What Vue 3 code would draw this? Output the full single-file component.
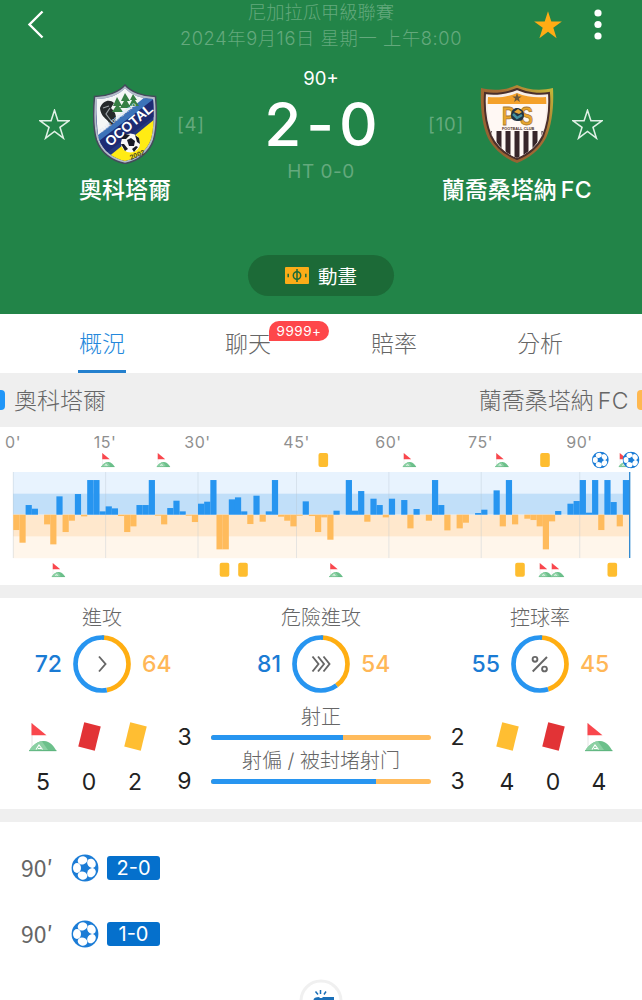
<template>
  <div class="page">
    <svg class="sprite" width="0" height="0">
      <symbol id="ball" viewBox="0 0 28 28">
        <circle cx="14" cy="14" r="13.4" fill="#1b7cd6" />
        <g fill="#fff">
          <ellipse
            v-for="a in [180, 108, 36, -36, -108]"
            :key="a"
            cx="22"
            cy="14"
            rx="4"
            ry="4.9"
            :transform="`rotate(${a} 14 14)`"
          />
        </g>
      </symbol>
      <symbol id="corner" viewBox="0 0 28 30">
        <path d="M3 1v25" stroke="#ddd" stroke-width="0.8" />
        <path d="M2.5 1L17.5 13.3h-15z" fill="#f9474d" />
        <path d="M0 29C5 21 11 18.500 15 19c6 .5 10 5 12.500 10z" fill="#6cc08b" />
        <path d="M0 29C4 22 9 19.500 13 19.500L19 28z" fill="#8bd0a3" />
        <path d="M7 27.500l3-4.500 3.500 4.500M9 26.500h3" fill="none" stroke="#fff" stroke-width="1.1" />
        <path d="M0 28.700h27.500" stroke="#58b078" stroke-width="0.8" />
      </symbol>
      <symbol id="star" viewBox="0 0 30 30">
        <path d="M15 1.200l3.300 10.200h10.600l-8.600 6.300 3.300 10.500-8.600-6.500-8.600 6.500 3.300-10.500L1.100 11.400h10.600z" />
      </symbol>
    </svg>

    <header class="head">
      <div class="topbar">
        <svg class="back" width="20" height="30" viewBox="0 0 20 30">
          <path d="M16.500 2.500L3.500 15.500l13 13" fill="none" stroke="#fff" stroke-width="2.400" />
        </svg>
        <div class="titles">
          <div class="league">尼加拉瓜甲級聯賽</div>
          <div class="date">2024年9月16日 星期一 上午8:00</div>
        </div>
        <svg class="fav" width="30" height="30"><use href="#star" /></svg>
        <svg class="more" width="8" height="32" viewBox="0 0 8 32">
          <circle v-for="y in [4, 15.5, 27]" :key="y" cx="4" :cy="y" r="3.600" fill="#fff" />
        </svg>
      </div>

      <div class="match">
        <div class="team">
          <div class="team-row">
            <svg class="star" width="31" height="31"><use href="#star" /></svg>
            <svg class="crest" width="64" height="80" viewBox="0 0 64 80">
              <defs>
                <clipPath id="shieldA">
                  <path d="M32 4C26 11 15 15 4 15c-1 15-1 30 2 40 4 12 14 19 26 22 12-3 22-10 26-22 3-10 3-25 2-40C49 15 38 11 32 4z" />
                </clipPath>
              </defs>
              <path
                d="M32 1C26 8 14 12.500 1.500 12.500 0 29 0 44 3.500 56 8 69 19 77 32 79.500 45 77 56 69 60.500 56 64 44 64 29 62.500 12.500 50 12.500 38 8 32 1z"
                fill="#b4bcc9"
                stroke="#444a5c"
                stroke-width="1.500"
              />
              <g clip-path="url(#shieldA)">
                <path d="M0 0h64v80H0z" fill="#23387f" />
                <path d="M2 11L34 0l20 13L5 54z" fill="#f4f7f6" />
                <path d="M5 51L52 13l12 2v8L6 62z" fill="#3c73b9" />
                <path d="M6 57L62 14v18L8 73z" fill="#1d2b73" />
                <path d="M14 74L62 35v46H20z" fill="#ffeb14" />
                <path d="M7 24c3-8 10-9 14-5l-3 5c5 5 6 9 4 14l-5 4c-1-8-9-7-10-18z" fill="#252a2b" />
                <path d="M17 24l-4 6 6 8M10 24l6-2" fill="none" stroke="#9ba2a5" stroke-width="1.200" />
                <g fill="#368044">
                  <path d="M24 13l-4 9h3l-4 6h11l-4-6h3zM32 9l-4 8h3l-4 7h11l-4-7h3zM40 10l-3 6h2l-3 6h10l-4-6h2z" />
                </g>
              </g>
              <text class="crest-club" transform="translate(8 49) rotate(-38)">CLUB DEPORTIVO</text>
              <text class="crest-name" transform="translate(17 63) rotate(-40)">OCOTAL</text>
              <circle cx="37.500" cy="59" r="9.600" fill="#f8f8f8" />
              <path d="M34 56l4-2 4 3-1 5-5 0zM28 55l4-5 5 1-4 4zM42 51l4 3 1 6-3-2zM28 60l3 0 4 5-3 2zM39 65l4-3 2 1-4 5z" fill="#171a25" />
              <text class="crest-year" transform="translate(38 76) rotate(-23)">2002</text>
            </svg>
            <span class="rank">[4]</span>
          </div>
          <div class="team-name">奧科塔爾</div>
        </div>

        <div class="score-box">
          <div class="minute">90+</div>
          <div class="score">2-0</div>
          <div class="half">HT 0-0</div>
        </div>

        <div class="team away">
          <div class="team-row">
            <span class="rank">[10]</span>
            <svg class="crest" width="74" height="80" viewBox="0 0 74 80">
              <defs>
                <linearGradient id="rim" x1="0" y1="1" x2="1" y2="0">
                  <stop offset="0" stop-color="#8d5d32" />
                  <stop offset="0.600" stop-color="#a66b34" />
                  <stop offset="1" stop-color="#c7bd39" />
                </linearGradient>
                <clipPath id="shieldB">
                  <path d="M37 9C28 13 18 14 8 13c-1 12 0 26 4 37 5 12 15 20 25 24 10-4 20-12 25-24 4-11 5-25 4-37-10 1-20 0-29-4z" />
                </clipPath>
              </defs>
              <path d="M37 1C27 6 13 7 1 4c-1 18 1 37 7 50 6 12 18 21 29 25 11-4 23-13 29-25 6-13 8-32 7-50C61 7 47 6 37 1z" fill="url(#rim)" />
              <path d="M37 5C28 9 15 11 5 9c-1 15 1 31 6 43 5 11 16 19 26 23 10-4 21-12 26-23 5-12 7-28 6-43C59 11 46 9 37 5z" fill="#f7eee8" stroke="#4a2f2b" stroke-width="2" />
              <g clip-path="url(#shieldB)">
                <path d="M0 0h74v80H0z" fill="#fff8f4" />
                <path d="M0 0h74v20H0z" fill="#f4a12b" />
                <path
                  v-for="x in [7, 16.5, 25.5, 34.5, 43.5, 52.5, 61.5]"
                  :key="x"
                  :d="`M${x} 47h5v33h-5z`"
                  fill="#372529"
                />
              </g>
              <path d="M37 9l1.200 3.500h3.500l-2.800 2 1 3.600-2.900-2.200-2.900 2.200 1-3.600-2.800-2h3.500z" fill="#6d573b" />
              <text class="crest-ps" transform="translate(22 41) scale(0.85 1.1)">P S</text>
              <path d="M31 32c0-6 3-8 6-8s7 2 7 7-3 6-6 6-7-1-7-5z" fill="#233342" />
              <path d="M34 28l4-3 4 3-3 2z" fill="#e7a637" />
              <path d="M33 30l4 4 5-3" fill="none" stroke="#4391a0" stroke-width="2.500" />
              <text class="crest-est" x="22" y="46">FOOTBALL CLUB</text>
            </svg>
            <svg class="star" width="31" height="31"><use href="#star" /></svg>
          </div>
          <div class="team-name">蘭喬桑塔納<span class="fc">FC</span></div>
        </div>
      </div>

      <button class="anim">
        <svg width="24" height="17" viewBox="0 0 24 17">
          <rect width="24" height="17" rx="1" fill="#fbac18" />
          <g fill="none" stroke="#1c6a37" stroke-width="1.500">
            <circle cx="12" cy="8.500" r="3.700" />
            <path d="M12 2v13M3.200 6.700v3.600M20.800 6.700v3.600" />
          </g>
        </svg>
        <span>動畫</span>
      </button>
    </header>

    <nav class="tabs">
      <div v-for="t in tabs" :key="t.label" class="tab" :class="{ active: t.active }">
        <span class="tab-label">{{ t.label }}</span>
        <span v-if="t.badge" class="badge">{{ t.badge }}</span>
      </div>
    </nav>

    <div class="teams-bar">
      <i class="chip home"></i>
      <span>奧科塔爾</span>
      <span class="right">蘭喬桑塔納<span class="fc">FC</span></span>
      <i class="chip guest"></i>
    </div>

    <svg class="chart" width="642" height="158" viewBox="0 427 642 158">
      <text v-for="m in marks" :key="m.label" class="mark" :x="m.x" y="448">{{ m.label }}</text>
      <rect x="13" y="472" width="616" height="22" fill="#e8f3fe" />
      <rect x="13" y="493.700" width="616" height="21" fill="#c1dff9" />
      <rect x="13" y="514.700" width="616" height="22" fill="#ffe8cd" />
      <rect x="13" y="536.700" width="616" height="21.500" fill="#fff6eb" />
      <path
        v-for="g in [0, 15, 30, 46, 61, 76, 92]"
        :key="g"
        :d="`M${barX(g)} 472V558`"
        stroke="#b4c3cd"
        stroke-opacity="0.350"
      />
      <rect
        v-for="(v, i) in momentum"
        :key="i"
        :x="barX(i)"
        :y="v > 0 ? 514.7 - v / 3 : 514.7"
        width="6.200"
        :height="Math.abs(v) / 3"
        :fill="v > 0 ? '#2795f0' : '#ffbb5c'"
      />
      <path d="M629.700 472v86" stroke="#2b86cf" stroke-width="1.300" />
      <template v-for="(e, i) in chartEvents" :key="'e' + i">
        <rect v-if="e.type === 'card'" :x="e.x - 4.800" :y="e.y - 7" width="9.600" height="14" rx="2" fill="#febd2f" />
        <use v-else-if="e.type === 'corner'" href="#corner" :x="e.x - 6.500" :y="e.y - 7.500" width="14" height="15" />
        <use v-else href="#ball" :x="e.x - 8.700" :y="e.y - 8.700" width="17.400" height="17.400" />
      </template>
    </svg>

    <div class="gap"></div>

    <section class="stats">
      <div class="rings">
        <div v-for="r in rings" :key="r.label" class="ring-cell">
          <div class="ring-label">{{ r.label }}</div>
          <div class="ring-row">
            <span class="num blue">{{ r.home }}</span>
            <svg width="58" height="58" viewBox="0 0 58 58">
              <g fill="none" stroke-width="4.700" transform="rotate(-90 29 29)">
                <circle cx="29" cy="29" r="26.500" stroke="#ffae12" pathLength="100" :stroke-dasharray="`${awayShare(r)} 200`" />
                <circle
                  cx="29"
                  cy="29"
                  r="26.500"
                  stroke="#2795f0"
                  pathLength="100"
                  :stroke-dasharray="`${100 - awayShare(r)} 200`"
                  :stroke-dashoffset="-awayShare(r)"
                />
                <circle cx="29" cy="29" r="26.500" stroke="#2795f0" pathLength="100" stroke-dasharray="1.3 200" />
              </g>
              <g fill="none" stroke="#666" stroke-width="1.900">
                <path v-if="r.icon === 'one'" d="M26 21.500l6.500 7.500-6.500 7.500" />
                <path v-else-if="r.icon === 'three'" d="M20.500 21.500l6 7.500-6 7.500M26 21.500l6 7.500-6 7.500M31.500 21.500l6 7.500-6 7.500" />
                <template v-else>
                  <circle cx="24" cy="24.300" r="2.400" />
                  <circle cx="33.500" cy="34" r="2.400" />
                  <path d="M36 22l-14.300 14.500" />
                </template>
              </g>
            </svg>
            <span class="num orange">{{ r.away }}</span>
          </div>
        </div>
      </div>

      <div class="counts">
        <div class="side">
          <div v-for="c in homeCounts" :key="c.type" class="count">
            <div class="count-icon">
              <svg v-if="c.type === 'corner'" width="28" height="30"><use href="#corner" /></svg>
              <i v-else class="card" :class="c.type"></i>
            </div>
            <div class="count-num">{{ c.value }}</div>
          </div>
        </div>
        <div class="shots">
          <div v-for="s in shots" :key="s.label" class="shot">
            <span class="shot-num">{{ s.home }}</span>
            <div class="shot-mid">
              <div class="shot-label">{{ s.label }}</div>
              <div class="bar">
                <div class="fill" :style="{ width: (s.home / (s.home + s.away)) * 100 + '%' }"></div>
              </div>
            </div>
            <span class="shot-num">{{ s.away }}</span>
          </div>
        </div>
        <div class="side">
          <div v-for="c in awayCounts" :key="c.type" class="count">
            <div class="count-icon">
              <svg v-if="c.type === 'corner'" width="28" height="30"><use href="#corner" /></svg>
              <i v-else class="card" :class="c.type"></i>
            </div>
            <div class="count-num">{{ c.value }}</div>
          </div>
        </div>
      </div>
    </section>

    <div class="gap"></div>

    <section class="events">
      <div v-for="g in goals" :key="g.score" class="event">
        <span class="event-min">{{ g.minute }}</span>
        <svg width="28" height="28"><use href="#ball" /></svg>
        <span class="event-score">{{ g.score }}</span>
      </div>
      <svg class="whistle" width="44" height="22" viewBox="0 0 44 22">
        <circle cx="22" cy="23" r="20" fill="#fff" stroke="#f0f0f0" stroke-width="3" />
        <path d="M21.500 12v4M16.500 13.500l2.500 3M27 13.500l-2 3" stroke="#1a6fb8" stroke-width="1.500" />
        <path d="M14.500 22c0-2 2-3 6-3v1h3v-1h11.500v3z" fill="#1a6fb8" />
      </svg>
    </section>
  </div>
</template>

<script setup>
const tabs = [
  { label: "概況", active: true },
  { label: "聊天", badge: "9999+" },
  { label: "賠率" },
  { label: "分析" },
];

const marks = [
  { label: "0'", x: 13 },
  { label: "15'", x: 105 },
  { label: "30'", x: 197.5 },
  { label: "45'", x: 296.5 },
  { label: "60'", x: 388.5 },
  { label: "75'", x: 480.5 },
  { label: "90'", x: 579.5 },
];

// one value per minute, positive = home, negative = away
const momentum = [
  -46, -84, 29, 18, 0, -29, -89, 55, -52, -18, 62, -5, 104, 104, 10, 25, 19, -4,
  -52, -35, 29, 29, 104, -3, -29, 20, 42, 10, -3, -22, 33, 39, 104, -104, -104,
  46, 52, 10, -28, 57, -21, 10, 104, -6, -18, -35, -3, 40, -4, -52, -8, -75, 12,
  0, 104, 12, 71, -21, 48, 29, -8, 48, 0, 44, -41, 17, 0, -18, 104, 29, -47, 0,
  -41, -24, 0, 5, 15, 0, 73, -35, 104, -29, 0, -12, -16, -35, -104, -20, 11, 0,
  33, 41, 104, 6, 104, -46, 104, 38, -35, 104,
];

const barX = (i) => 13.3 + i * 6.157;

const chartEvents = [
  { type: "corner", x: 107.5, y: 460 },
  { type: "corner", x: 163, y: 460 },
  { type: "card", x: 323.3, y: 460 },
  { type: "corner", x: 409, y: 460 },
  { type: "corner", x: 501.5, y: 460 },
  { type: "card", x: 545, y: 460 },
  { type: "ball", x: 600.3, y: 460 },
  { type: "corner", x: 625, y: 460 },
  { type: "ball", x: 631, y: 460 },
  { type: "corner", x: 58, y: 570 },
  { type: "card", x: 224.5, y: 569.7 },
  { type: "card", x: 243, y: 569.7 },
  { type: "corner", x: 335.5, y: 570 },
  { type: "card", x: 520, y: 569.7 },
  { type: "corner", x: 545, y: 570 },
  { type: "corner", x: 557, y: 570 },
  { type: "card", x: 612.3, y: 569.7 },
];

const rings = [
  { label: "進攻", home: 72, away: 64, icon: "one" },
  { label: "危險進攻", home: 81, away: 54, icon: "three" },
  { label: "控球率", home: 55, away: 45, icon: "percent" },
];

const awayShare = (r) => (r.away / (r.home + r.away)) * 100;

const homeCounts = [
  { type: "corner", value: 5 },
  { type: "red", value: 0 },
  { type: "yellow", value: 2 },
];
const awayCounts = [
  { type: "yellow", value: 4 },
  { type: "red", value: 0 },
  { type: "corner", value: 4 },
];

const shots = [
  { label: "射正", home: 3, away: 2 },
  { label: "射偏 / 被封堵射门", home: 9, away: 3 },
];

const goals = [
  { minute: "90′", score: "2-0" },
  { minute: "90′", score: "1-0" },
];
</script>

<style>
body {
  margin: 0;
}
</style>

<style scoped>
.page {
  width: 642px;
  height: 1000px;
  overflow: hidden;
  background: #fff;
  font-family: Inter, "Noto Sans CJK TC", sans-serif;
  color: #666;
}
.sprite {
  display: block;
}
.head {
  height: 314px;
  background: #228448;
  color: #fff;
  display: flex;
  flex-direction: column;
  align-items: center;
}
.topbar {
  width: 100%;
  height: 64px;
  display: flex;
  align-items: flex-start;
  box-sizing: border-box;
  padding-left: 26px;
}
.back {
  margin-top: 9px;
}
.titles {
  width: 550px;
  text-align: center;
  color: #64a97d;
  font-size: 18.3px;
  font-weight: 300;
  line-height: 26px;
  margin-top: -1px;
  margin-right: -63px;
}
.date {
  letter-spacing: 0.6px;
}
.fav {
  fill: #ffac14;
  margin-top: 10px;
}
.more {
  margin-left: 31px;
  margin-top: 9px;
}
.match {
  width: 100%;
  height: 191px;
  display: grid;
  grid-template-columns: 250px 142px 250px;
}
.team {
  padding-top: 20px;
}
.team-row {
  height: 80px;
  display: flex;
  align-items: center;
  padding-left: 39px;
}
.away .team-row {
  padding: 0 39px 0 0;
  justify-content: flex-end;
}
.star {
  fill: none;
  stroke: #dff0e5;
  stroke-width: 1.5;
}
.crest {
  margin-left: 23px;
  margin-right: 20px;
}
.away .crest {
  margin-left: 16px;
  margin-right: 18px;
}
.rank {
  font-size: 18.5px;
  letter-spacing: 0.8px;
  color: #64a97d;
}
.crest text {
  font-family: "Liberation Sans", sans-serif;
  font-weight: bold;
}
.crest-name {
  font-size: 13.8px;
  fill: #fff;
}
.crest-club {
  font-size: 5px;
  fill: #dce8f5;
}
.crest-year {
  font-size: 7px;
  fill: #4d4a20;
}
.crest-ps {
  font-size: 23px;
  fill: #eaa62c;
  stroke: #a87a35;
  stroke-width: 0.7;
}
.crest-est {
  font-size: 3.8px;
  fill: #4a2f2b;
}
.team-name {
  width: 250px;
  text-align: center;
  font-size: 23px;
  font-weight: 500;
  line-height: 30px;
  margin-top: 11px;
}
.fc {
  letter-spacing: 0.5px;
  margin-left: 4px;
}
.score-box {
  text-align: center;
}
.minute {
  font-size: 18.5px;
  line-height: 24px;
  margin-top: 2px;
}
.score {
  font-size: 60px;
  font-weight: 500;
  line-height: 68px;
  letter-spacing: 5px;
  padding-left: 5px;
  white-space: nowrap;
}
.half {
  font-size: 19px;
  line-height: 26px;
  margin-top: 1px;
  color: #64a97d;
  letter-spacing: 0.5px;
}
.anim {
  width: 146px;
  height: 41px;
  border: none;
  border-radius: 21px;
  background: #1c6a37;
  color: #fff;
  font: inherit;
  font-size: 19.5px;
  display: flex;
  align-items: center;
  justify-content: center;
  gap: 9px;
  padding: 0;
}
.tabs {
  height: 59px;
  padding-left: 29px;
  display: flex;
}
.tab {
  width: 146px;
  position: relative;
  display: flex;
  justify-content: center;
}
.tab-label {
  font-size: 23px;
  font-weight: 300;
  line-height: 60px;
}
.tab.active {
  color: #2488dc;
}
.active .tab-label {
  height: 56px;
  padding: 0 1px;
  border-bottom: 3px solid #2480ce;
}
.badge {
  position: absolute;
  left: 94px;
  top: 7px;
  width: 60px;
  height: 20px;
  border-radius: 10px 10px 10px 0;
  background: #fe474a;
  color: #fff;
  font-size: 13.5px;
  line-height: 20px;
  letter-spacing: 0.5px;
  text-align: center;
}
.teams-bar {
  height: 54px;
  background: #efefef;
  display: flex;
  align-items: center;
  font-size: 23px;
  font-weight: 300;
}
.teams-bar > span {
  margin-top: -2px;
}
.teams-bar .right {
  margin-left: auto;
}
.chip {
  width: 5px;
  height: 20px;
  background: #2196f8;
  border-radius: 0 4px 4px 0;
  margin-right: 9px;
}
.chip.guest {
  background: #ffb850;
  border-radius: 4px 0 0 4px;
  margin: 0 0 0 8px;
}
.chart {
  display: block;
}
.mark {
  font-size: 16px;
  fill: #8f8f8f;
  text-anchor: middle;
  letter-spacing: 0.5px;
}
.gap {
  height: 13px;
  background: #efefef;
}
.stats {
  height: 211px;
}
.rings {
  display: grid;
  grid-template-columns: repeat(3, 219px);
  margin-left: -7.5px;
}
.ring-label {
  font-size: 20px;
  font-weight: 300;
  line-height: 26px;
  padding-top: 7px;
  text-align: center;
}
.ring-row {
  display: flex;
  justify-content: center;
  align-items: center;
  gap: 11px;
  margin-top: 3.5px;
}
.num {
  width: 30px;
  font-size: 23px;
  font-weight: 500;
}
.num.blue {
  color: #1a7bd4;
  text-align: right;
}
.num.orange {
  color: #ffb757;
}
.counts {
  display: flex;
  margin-top: 11px;
}
.side {
  flex: none;
  width: 138px;
  padding-left: 20px;
  display: flex;
}
.count {
  width: 46px;
  text-align: center;
}
.count-icon {
  height: 44px;
  display: flex;
  align-items: center;
  justify-content: center;
  margin-top: 11px;
}
.card {
  width: 17px;
  height: 25px;
  background: #e23336;
  transform: rotate(14deg);
}
.card.yellow {
  background: #ffbe32;
}
.count-num {
  font-size: 23px;
  line-height: 28px;
  margin-top: 9px;
  color: #222;
}
.shots {
  flex: none;
  width: 326px;
  margin-top: -3px;
}
.shots + .side {
  padding-left: 0;
}
.shot {
  height: 43.5px;
  display: flex;
  align-items: flex-end;
}
.shot-num {
  flex: none;
  width: 53px;
  text-align: center;
  font-size: 23px;
  line-height: 28px;
  margin-bottom: -7px;
  color: #222;
}
.shot-mid {
  flex: none;
  width: 220px;
}
.shot-label {
  font-size: 20px;
  font-weight: 300;
  line-height: 26px;
  text-align: center;
  margin-bottom: 5px;
  white-space: nowrap;
}
.bar {
  height: 5px;
  border-radius: 3px;
  background: #ffbb5c;
  overflow: hidden;
  margin-bottom: 4px;
}
.fill {
  height: 5px;
  background: #2795f0;
}
.events {
  height: 178px;
  position: relative;
  padding-top: 13px;
  box-sizing: border-box;
}
.event {
  height: 66px;
  display: flex;
  align-items: center;
  padding-left: 21px;
}
.event-min {
  width: 50px;
  font-family: "Noto Sans CJK TC", sans-serif;
  font-size: 23px;
  margin-top: -3px;
}
.event-score {
  width: 53px;
  height: 24px;
  margin-left: 8px;
  background: #0570cc;
  border-radius: 3px;
  color: #fff;
  font-size: 20px;
  line-height: 25px;
  text-align: center;
}
.whistle {
  position: absolute;
  left: 299px;
  bottom: 0;
}
</style>
